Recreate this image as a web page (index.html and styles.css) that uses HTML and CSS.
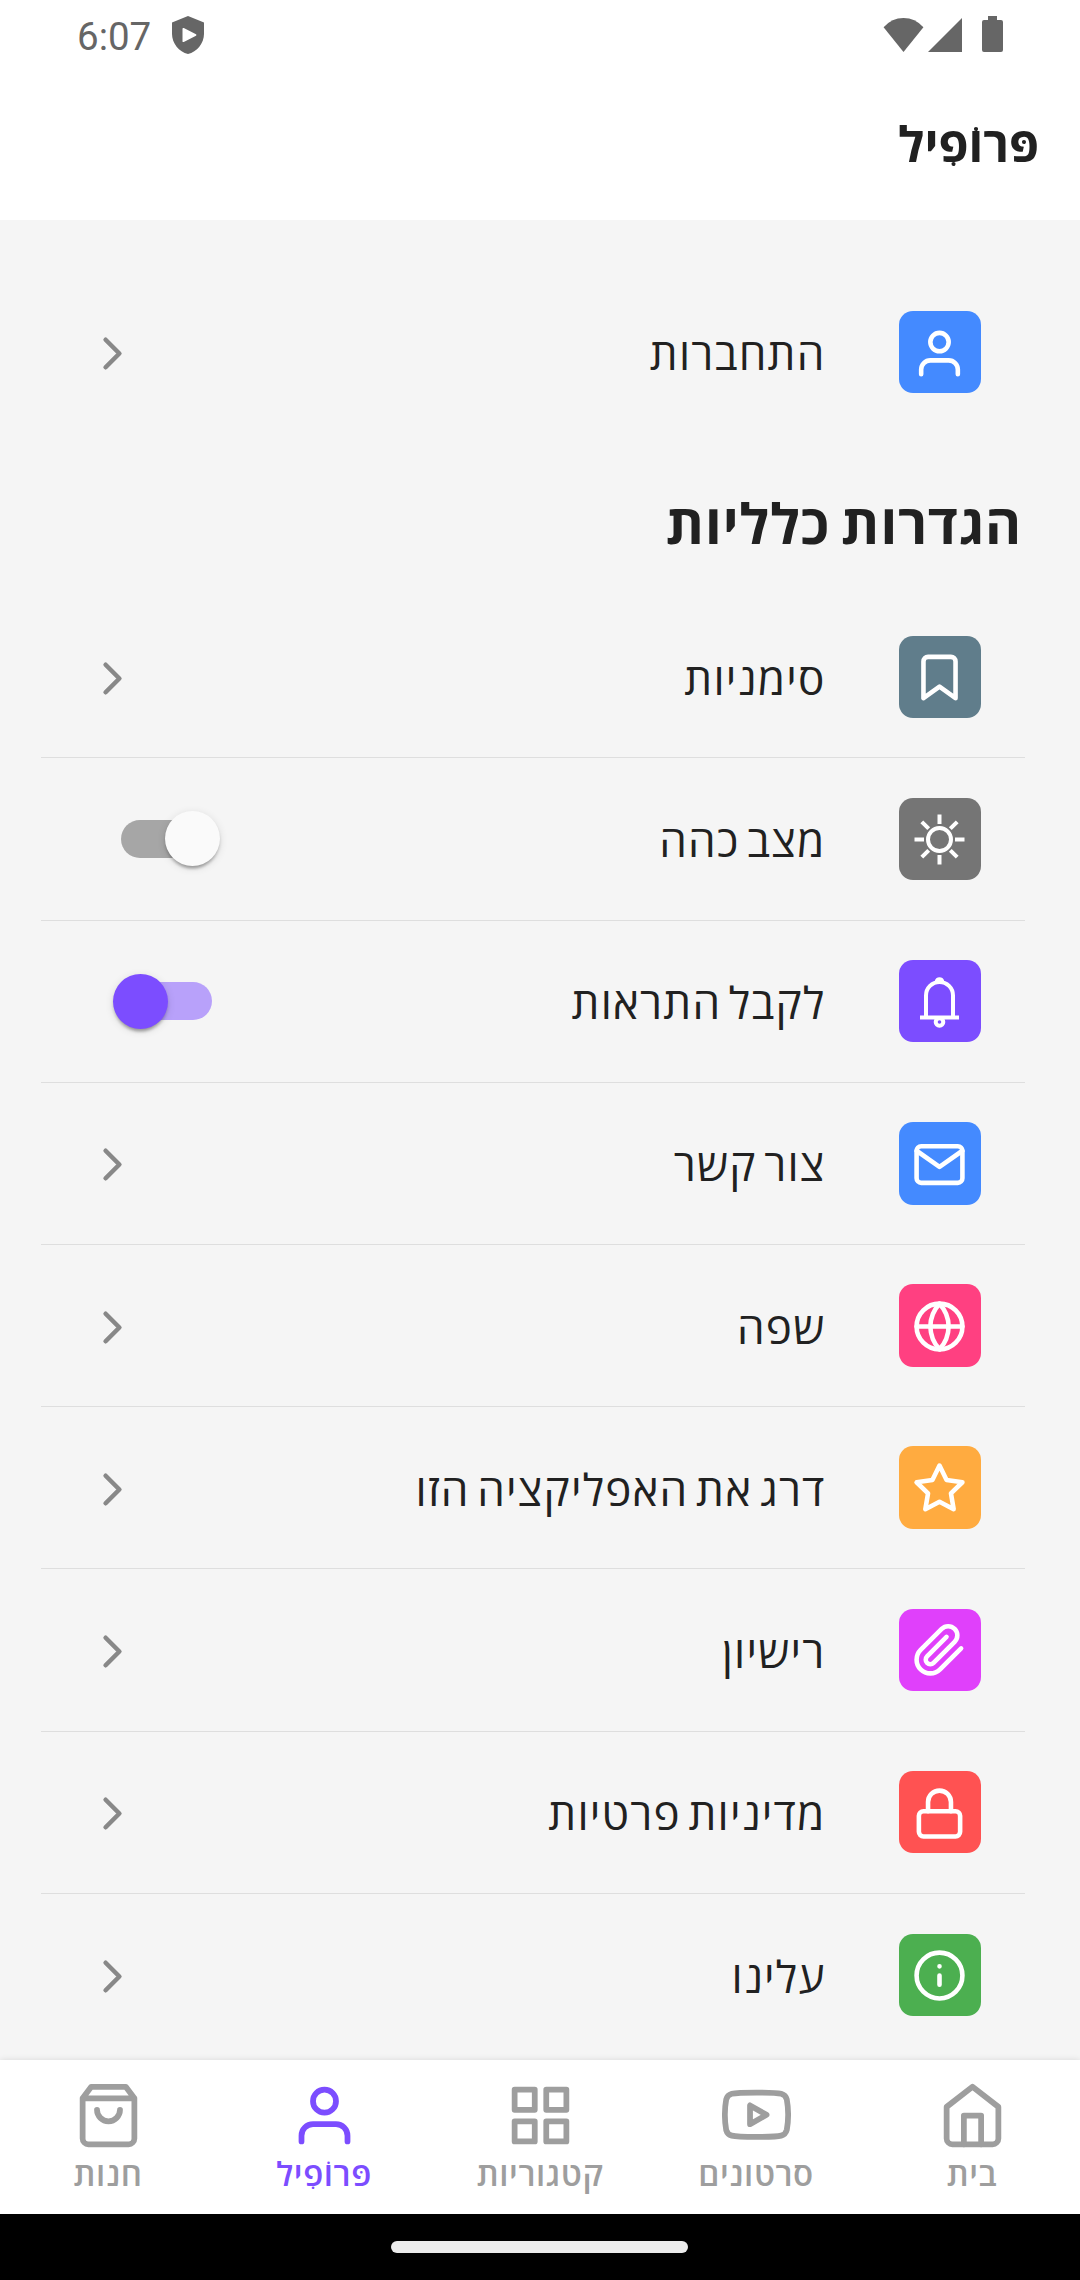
FILE: index.html
```html
<!DOCTYPE html>
<html lang="he" dir="rtl">
<head>
  <meta charset="UTF-8" />
  <meta name="viewport" content="width=device-width, initial-scale=1.0">
  <title>פּרוֹפִיל</title>
  <link rel="stylesheet" href="styles.css">
</head>
<body>
  <svg class="defs" xmlns="http://www.w3.org/2000/svg">
    <symbol id="i-user" viewBox="0 0 24 24"><path d="M20 21v-2a4 4 0 0 0-4-4H8a4 4 0 0 0-4 4v2"/><circle cx="12" cy="7" r="4"/></symbol>
    <symbol id="i-chevron" viewBox="0 0 24 24"><path d="M9 18l6-6-6-6"/></symbol>
  </svg>

  <div class="status-bar" dir="ltr">
    <span class="clock">6:07</span>
    <svg class="shield" viewBox="0 0 32 38"><path fill-rule="evenodd" d="M16 0L32 6.500V18C32 27 25 36 16 38C7 36 0 27 0 18V6.500ZM10.500 12.800V25.200Q10.500 26.400 11.800 25.900L24 19.800Q25 19 24 18.300L11.800 12Q10.500 11.600 10.500 12.800Z"/></svg>
    <div class="status-icons">
      <svg class="wifi" viewBox="0 0 41 35"><path d="M20.500 35L0 9.500Q8.500 0 20.500 0T41 9.500Z"/></svg>
      <svg class="signal" viewBox="0 0 34 34"><path d="M34 0V34H0Z"/></svg>
      <svg class="battery" viewBox="0 0 21 36"><path d="M6 0H15V4H19Q21 4 21 6V34Q21 36 19 36H2Q0 36 0 34V6Q0 4 2 4H6Z"/></svg>
    </div>
  </div>

  <header class="app-bar"><h1>פּרוֹפִיל</h1></header>

  <main>
    <div class="row">
      <div class="tile blue"><svg class="icon"><use href="#i-user"/></svg></div>
      <span class="label">התחברות</span>
      <svg class="icon chevron"><use href="#i-chevron"/></svg>
    </div>

    <h2>הגדרות כלליות</h2>

    <div class="settings">
      <div class="row">
        <div class="tile slate"><svg class="icon" viewBox="0 0 24 24"><path d="M19 21l-7-5-7 5V5a2 2 0 0 1 2-2h10a2 2 0 0 1 2 2z"/></svg></div>
        <span class="label">סימניות</span>
        <svg class="icon chevron"><use href="#i-chevron"/></svg>
      </div>
      <div class="row">
        <div class="tile gray">
          <svg class="icon line" viewBox="0 0 55 55">
            <circle cx="27.500" cy="27.500" r="11.500"/>
            <path d="M27.500 2.500V12M27.500 43V52.500M2.500 27.500H12M43 27.500H52.500M9.800 9.800L16.700 16.700M38.300 38.300L45.200 45.200M9.800 45.200L16.700 38.300M38.300 16.700L45.200 9.800"/>
          </svg>
        </div>
        <span class="label">מצב כהה</span>
        <div class="switch"><div class="thumb"></div></div>
      </div>
      <div class="row">
        <div class="tile purple">
          <svg class="icon line" viewBox="0 0 55 55">
            <path d="M14 42.500V20.500A13.500 13.500 0 0 1 41 20.500V42.500M8 42.500H47"/>
            <path d="M24.800 6.500A2.700 2.300 0 0 1 30.200 6.500"/>
            <circle cx="27.500" cy="47" r="3.800"/>
          </svg>
        </div>
        <span class="label">לקבל התראות</span>
        <div class="switch on"><div class="thumb"></div></div>
      </div>
      <div class="row">
        <div class="tile blue"><svg class="icon" viewBox="0 0 24 24"><path d="M4 4h16c1.100 0 2 .9 2 2v12c0 1.100-.9 2-2 2H4c-1.100 0-2-.9-2-2V6c0-1.100.9-2 2-2z"/><path d="M22 6l-10 7L2 6"/></svg></div>
        <span class="label">צור קשר</span>
        <svg class="icon chevron"><use href="#i-chevron"/></svg>
      </div>
      <div class="row">
        <div class="tile pink"><svg class="icon" viewBox="0 0 24 24"><circle cx="12" cy="12" r="10"/><path d="M2 12h20M12 2a15.300 15.300 0 0 1 4 10 15.300 15.300 0 0 1-4 10 15.300 15.300 0 0 1-4-10 15.300 15.300 0 0 1 4-10z"/></svg></div>
        <span class="label">שפה</span>
        <svg class="icon chevron"><use href="#i-chevron"/></svg>
      </div>
      <div class="row">
        <div class="tile orange"><svg class="icon" viewBox="0 0 24 24"><path d="M12 2l3.090 6.260L22 9.270l-5 4.870 1.180 6.880L12 17.770l-6.180 3.250L7 14.140 2 9.270l6.910-1.010z"/></svg></div>
        <span class="label">דרג את האפליקציה הזו</span>
        <svg class="icon chevron"><use href="#i-chevron"/></svg>
      </div>
      <div class="row">
        <div class="tile magenta"><svg class="icon" viewBox="0 0 24 24"><path d="M21.440 11.050l-9.190 9.190a6 6 0 0 1-8.490-8.490l9.190-9.190a4 4 0 0 1 5.660 5.660l-9.200 9.190a2 2 0 0 1-2.830-2.830l8.490-8.480"/></svg></div>
        <span class="label">רישיון</span>
        <svg class="icon chevron"><use href="#i-chevron"/></svg>
      </div>
      <div class="row">
        <div class="tile red"><svg class="icon" viewBox="0 0 24 24"><rect x="3" y="11" width="18" height="11" rx="2"/><path d="M7 11V7a5 5 0 0 1 10 0v4"/></svg></div>
        <span class="label">מדיניות פרטיות</span>
        <svg class="icon chevron"><use href="#i-chevron"/></svg>
      </div>
      <div class="row">
        <div class="tile green"><svg class="icon" viewBox="0 0 24 24"><circle cx="12" cy="12" r="10"/><path d="M12 16v-4M12 8h.01"/></svg></div>
        <span class="label">עלינו</span>
        <svg class="icon chevron"><use href="#i-chevron"/></svg>
      </div>
    </div>
  </main>

  <nav class="tabs">
    <div class="tab">
      <svg class="icon" viewBox="0 0 24 24"><path d="M3 9l9-7 9 7v11a2 2 0 0 1-2 2H5a2 2 0 0 1-2-2z"/><path d="M9 22V12h6v10"/></svg>
      <span>בית</span>
    </div>
    <div class="tab">
      <svg class="icon" viewBox="0 0 24 24"><path d="M22.540 6.420a2.780 2.780 0 0 0-1.940-2C18.880 4 12 4 12 4s-6.880 0-8.600.46a2.780 2.780 0 0 0-1.940 2A29 29 0 0 0 1 11.750a29 29 0 0 0 .46 5.330A2.780 2.780 0 0 0 3.400 19c1.720.46 8.600.46 8.600.46s6.880 0 8.600-.46a2.780 2.780 0 0 0 1.940-2 29 29 0 0 0 .46-5.250 29 29 0 0 0-.46-5.330z"/><path d="M9.750 15.020l5.750-3.270-5.750-3.270z"/></svg>
      <span>סרטונים</span>
    </div>
    <div class="tab">
      <svg class="icon" viewBox="0 0 24 24"><path d="M3 3h7v7H3zM14 3h7v7h-7zM14 14h7v7h-7zM3 14h7v7H3z"/></svg>
      <span>קטגוריות</span>
    </div>
    <div class="tab active">
      <svg class="icon"><use href="#i-user"/></svg>
      <span>פּרוֹפִיל</span>
    </div>
    <div class="tab">
      <svg class="icon" viewBox="0 0 24 24"><path d="M6 2L3 6v14a2 2 0 0 0 2 2h14a2 2 0 0 0 2-2V6l-3-4zM3 6h18M16 10a4 4 0 0 1-8 0"/></svg>
      <span>חנות</span>
    </div>
  </nav>
  <div class="gesture-bar"><div class="pill"></div></div>
</body>
</html>
```
FILE: styles.css
```css
* { box-sizing: border-box; }
body {
  margin: 0;
  width: 1080px;
  height: 2280px;
  display: flex;
  flex-direction: column;
  overflow: hidden;
  background: #f5f5f5;
  color: #212121;
  font-family: "Open Sans", "Noto Sans", sans-serif;
}
h1, h2 { margin: 0; font-weight: 700; }
.defs { display: none; }

.status-bar {
  height: 66px;
  padding: 0 77px;
  display: flex;
  align-items: flex-start;
  background: #fff;
  color: #666;
  fill: #666;
}
.clock {
  width: 95px;
  padding-top: 14px;
  font: 38.5px/46px Roboto, sans-serif;
}
.shield { width: 32px; height: 38px; margin-top: 16px; }
.status-icons {
  display: flex;
  margin-left: auto;
  padding-top: 16px;
}
.wifi { width: 41px; height: 34px; margin: 1.500px 4px 0 0; }
.signal { width: 34px; height: 34px; margin: 1.500px 20px 0 0; }
.battery { width: 21px; height: 36px; }

.app-bar {
  height: 154px;
  padding: 0 41px;
  display: flex;
  align-items: center;
  background: #fff;
}
h1 { font-size: 48.500px; line-height: 66px; }

main {
  flex: 1;
  min-height: 0;
  padding: 51px 55px 0 41px;
  overflow: hidden;
}
h2 {
  height: 163px;
  padding: 52px 3px 0 0;
  font-size: 55px;
  line-height: 75px;
  letter-spacing: .8px;
  word-spacing: -4px;
}
.row {
  height: 162.200px;
  padding: 0 43px 0 44px;
  display: flex;
  align-items: center;
}
.settings .row { border-bottom: 1px solid #dedede; }
.settings .row:last-child { border-bottom: none; }
.label {
  flex: 1;
  margin-right: 73px;
  padding-top: 2px;
  font-size: 44px;
  font-weight: 500;
  line-height: 60px;
  letter-spacing: 1.200px;
  word-spacing: -5px;
}
.icon {
  width: 55px;
  height: 55px;
  flex: none;
  fill: none;
  stroke: currentColor;
  stroke-width: 2;
  stroke-linecap: round;
  stroke-linejoin: round;
}
.icon.line {
  stroke-width: 4;
  stroke-linecap: butt;
}
.chevron { color: #888; margin-top: 3px; }

.tile {
  width: 82.500px;
  height: 82.500px;
  padding-top: 2px;
  display: flex;
  align-items: center;
  justify-content: center;
  border-radius: 14px;
  color: #fff;
}
.row .tile { margin-right: 1px; }
.blue { background: #448aff; }
.slate { background: #607d8b; }
.gray { background: #757575; }
.purple { background: #7c4dff; }
.pink { background: #ff4081; }
.orange { background: #ffab40; }
.magenta { background: #e040fb; }
.red { background: #ff5252; }
.green { background: #4caf50; }

.switch {
  width: 91px;
  height: 38.500px;
  margin-left: 36px;
  display: flex;
  align-items: center;
  border-radius: 20px;
  background: #a6a6a6;
}
.thumb {
  flex: none;
  width: 55px;
  height: 55px;
  margin: 0 -8px;
  border-radius: 50%;
  background: #fafafa;
  box-shadow: 0 5px 3px -3px rgba(0,0,0,.2), 0 3px 3px rgba(0,0,0,.14), 0 2px 8px rgba(0,0,0,.12);
}
.switch.on { justify-content: flex-end; background: #b8a1fa; }
.switch.on .thumb { background: #7c4dff; }

.tabs {
  height: 154px;
  display: flex;
  background: #fff;
  box-shadow: 0 0 6px rgba(0,0,0,.12);
  z-index: 1;
}
.tab {
  flex: 1;
  padding-top: 21px;
  display: flex;
  flex-direction: column;
  align-items: center;
  color: #9e9e9e;
  font-size: 33px;
  font-weight: 650;
  line-height: 47px;
  letter-spacing: .6px;
}
.tab .icon { width: 69px; height: 69px; }
.tab.active { color: #7c4dff; }

.gesture-bar {
  height: 66px;
  display: flex;
  align-items: center;
  justify-content: center;
  background: #000;
  z-index: 2;
}
.pill {
  width: 297px;
  height: 12px;
  margin-right: 2px;
  border-radius: 6px;
  background: #ececec;
}
```
